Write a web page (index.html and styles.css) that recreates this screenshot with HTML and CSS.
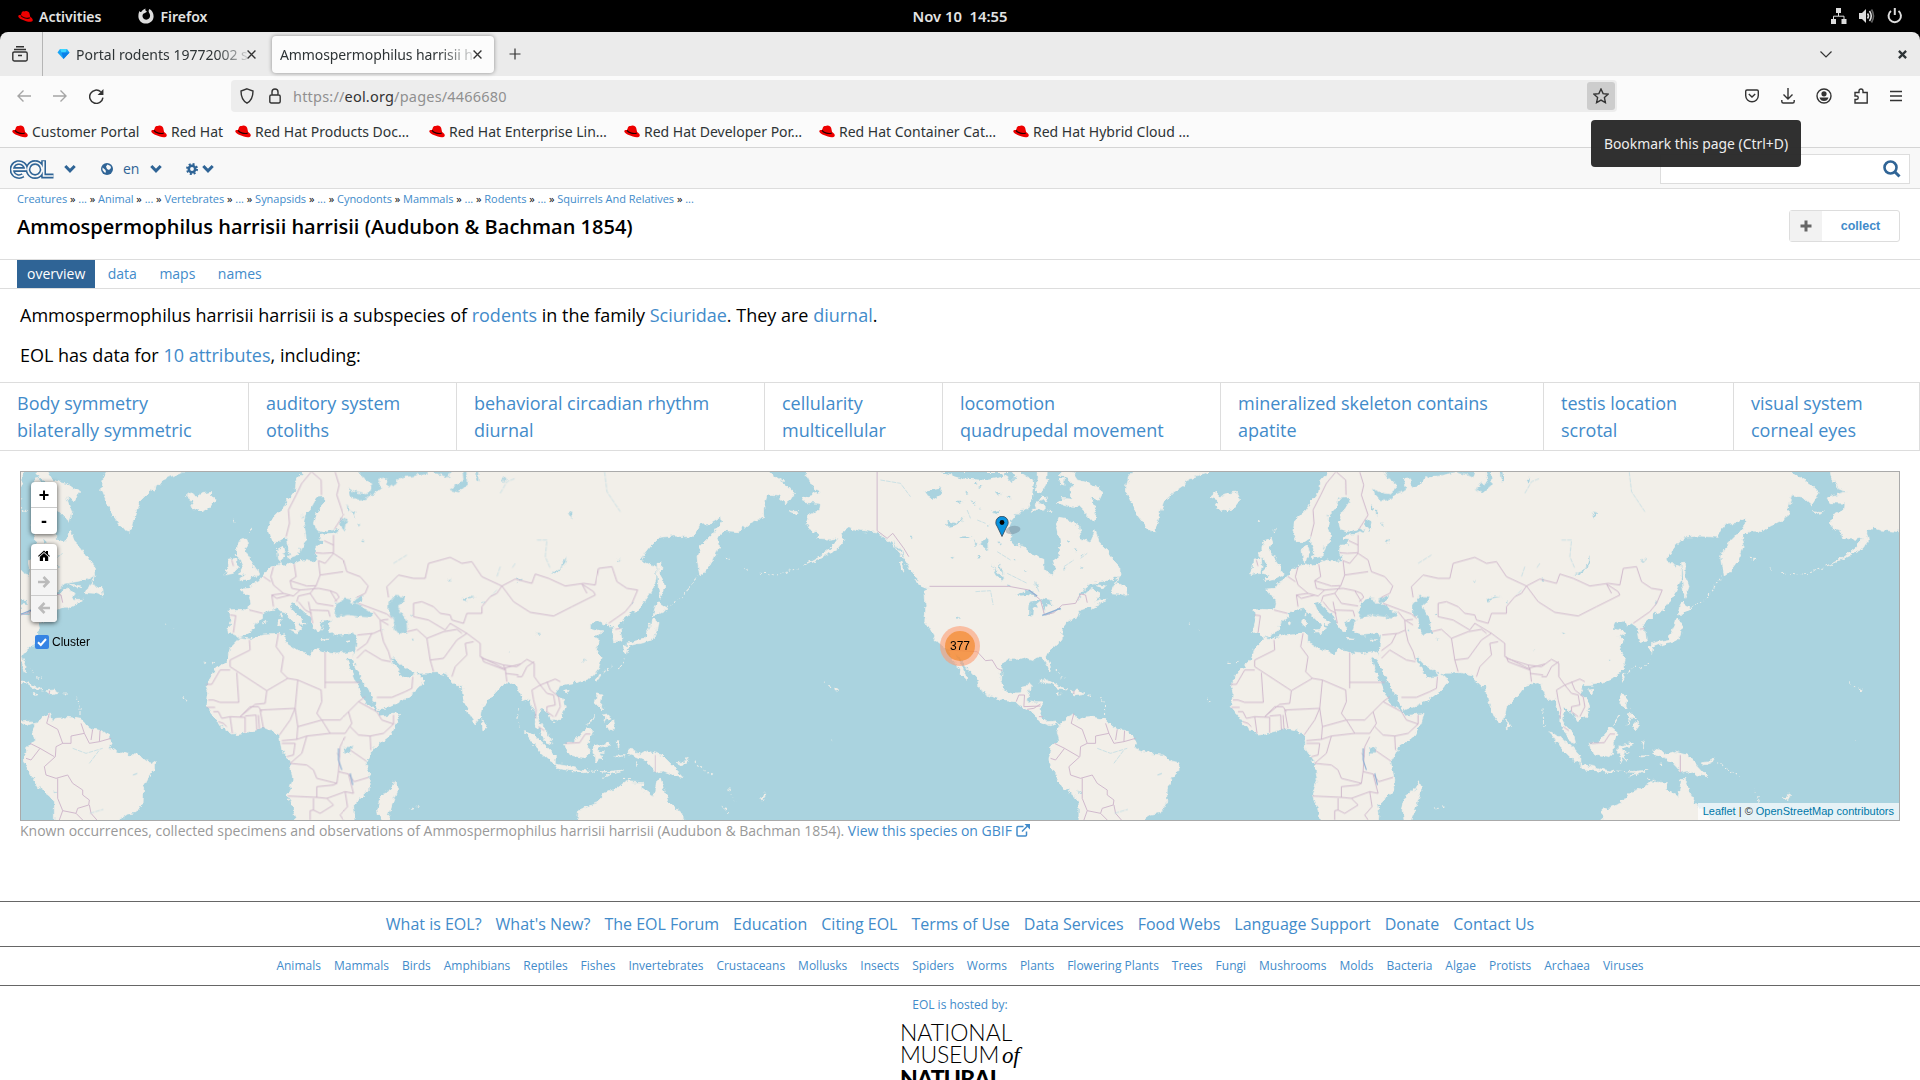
FILE: index.html
```html
<!DOCTYPE html>
<html lang="en">
<head>
<meta charset="utf-8">
<title>Ammospermophilus harrisii harrisii</title>
<link rel="stylesheet" href="styles.css">
</head>
<body>
<svg class="defs" width="0" height="0">
<defs>
<symbol id="hat" viewBox="0 0 16 13"><path fill="#e00" d="M3.600 3.500C4 1.500 5 .7 6 1c1 .3 1.500-.5 2.700-.4 1.700.2 3 .8 3.500 2.500l.9 3.800c1.500.9 3 2.200 2.600 3.800-.5 1.900-3.900 1.800-6.900.8C5.500 10.500.7 8.700.3 6.500.1 5.200 1.300 4.800 3 5z"/><path fill="none" stroke="#200" stroke-width="1.200" d="M3 5.400c1.400 2.300 7 4 9.700 2.500"/></symbol>
<symbol id="chev" viewBox="0 0 12 10"><path d="M1.300 2 6 6.800l4.700-4.800" fill="none" stroke="#2f6496" stroke-width="3"/></symbol>
</defs>
</svg>

<header class="gnome">
  <div class="gleft"><svg class="ghat"><use href="#hat"/></svg><b class="act">Activities</b>
  <svg class="gfox" viewBox="0 0 16 16"><path fill="#ddd" fill-rule="evenodd" d="M1.500 3C2 4 2.600 4 3.200 4 4 2.500 5.500 1.200 7.500.5 7 2 7.500 3 9 3.700 7.500 5 5 5 4.600 7c-.5 2.500 1.200 4.700 3.600 4.700 2.300 0 3.900-1.800 3.900-3.900 0-1.800-1-2.700-1.400-4C10.500 2.500 11 1.500 11.500 1 14 2.500 15.600 5 15.600 8.300c0 4.300-3.300 7.300-7.500 7.300S.4 12.500.4 8.400C.4 6 .8 4.500 1.500 3z"/></svg><b>Firefox</b></div>
  <b class="clock">Nov 10&nbsp; 14:55</b>
  <div class="gright">
    <svg width="16" height="16" viewBox="0 0 16 16"><path fill="#ddd" d="M5 0h5v5H5zM0 11h5v5H0zM10.500 11h5v5h-5z"/><path fill="none" stroke="#ddd" d="M7.500 5v3M2.500 11V8.200h10.500V11"/></svg>
    <svg width="16" height="16" viewBox="0 0 16 16"><path fill="#ddd" d="M0 5h3l4-4v14l-4-4H0z"/><path fill="none" stroke="#ddd" stroke-width="1.600" d="M8.500 5.500q2 2.500 0 5M10.500 3q3.500 5 0 10"/><path fill="none" stroke="#666" stroke-width="1.600" d="M12.500 1.500q4 6.500 0 13"/></svg>
    <svg width="16" height="16" viewBox="0 0 16 16"><path fill="none" stroke="#ddd" stroke-width="2" d="M4 3a6.200 6.200 0 1 0 7.500 0M7.800 0v7"/></svg>
  </div>
</header>

<div class="browser">
  <div class="tabbar">
    <div class="fxview"><svg width="16" height="16" viewBox="0 0 16 16"><path fill="none" stroke="#333" stroke-width="1.400" d="M4 .8h8M2 3.500h12M2.200 6h11.600q1.400 0 1.400 1.400v6.200q0 1.400-1.400 1.400H2.200q-1.400 0-1.400-1.400V7.400Q.8 6 2.200 6zM6 9.500h4"/></svg></div>
    <div class="tab"><svg width="13" height="12" viewBox="0 0 12 12"><path fill="#19a5f5" d="M2.500 1h7L12 4.500 6 11 0 4.500z"/><path fill="#3dd5ff" d="M2.500 1h7L8 4.500H4z"/><path fill="#0b7fe8" d="M4 4.500h8L6 11z"/></svg><span class="tt t1">Portal rodents 19772002 s</span><svg class="x" viewBox="0 0 8 8"><path d="m.5.500 7 7m0-7-7 7"/></svg></div>
    <div class="tab on"><span class="tt t2">Ammospermophilus harrisii h</span><svg class="x" viewBox="0 0 8 8"><path d="m.5.500 7 7m0-7-7 7"/></svg></div>
    <svg class="plus" viewBox="0 0 12 12"><path d="M6 .5v11M.5 6h11"/></svg>
    <svg class="down" viewBox="0 0 12 7"><path d="m.5.500 5.500 5.500L11.500.5"/></svg>
    <svg class="close" viewBox="0 0 8 8"><path d="m.8.800 6.400 6.400m0-6.400L.8 7.200"/></svg>
  </div>
  <div class="toolbar">
    <div class="nav">
      <svg class="dim" width="14" height="12" viewBox="0 0 14 12"><path d="M14 6H1m5.500-5.500L1 6l5.500 5.500"/></svg>
      <svg class="dim" width="14" height="12" viewBox="0 0 14 12"><path d="M0 6h13M7.500.5 13 6l-5.500 5.500"/></svg>
      <svg width="15" height="15" viewBox="0 0 14 14"><path d="M11 2.600A6.200 6.200 0 1 0 13 8"/><path fill="#333" stroke="none" d="M13.500 0v5.500H8z"/></svg>
    </div>
    <div class="url">
      <svg width="14" height="16" viewBox="0 0 14 16"><path d="M7 .8 13 3c0 6-2 10-6 12.200C3 13 1 9 1 3z"/></svg>
      <svg width="12" height="16" viewBox="0 0 12 16"><path d="M2.300 7h7.400q1.500 0 1.500 1.500v5q0 1.500-1.500 1.500H2.300Q.8 15 .8 13.500v-5Q.8 7 2.300 7zM3 7V4a3 3 0 0 1 6 0v3"/></svg>
      <span class="addr">https://<i>eol.org</i>/pages/4466680</span>
      <span class="star"><svg width="16" height="16" viewBox="0 0 16 16"><path d="m8 1 2.100 4.600 5 .6-3.700 3.400 1 5L8 12.100l-4.400 2.500 1-5L.9 6.200l5-.6z"/></svg></span>
    </div>
    <div class="tools">
      <svg width="14" height="14" viewBox="0 0 14 14"><path d="M2 1h10q1.300 0 1.300 1.300V6.500a6.300 6.300 0 0 1-12.600 0V2.300Q.7 1 2 1zM3.800 5 7 8l3.200-3"/></svg>
      <svg width="14" height="16" viewBox="0 0 14 16"><path d="M7 0v11M2.500 6.500 7 11l4.500-4.500M.8 12v1.500q0 1.500 1.500 1.500h9.400q1.500 0 1.500-1.500V12"/></svg>
      <svg width="16" height="16" viewBox="0 0 16 16"><circle cx="8" cy="8" r="7"/><circle cx="8" cy="5.800" r="2.600" fill="#333" stroke="none"/><path fill="#333" stroke="none" d="M3.500 9.500h9q-1 3.500-4.500 3.500t-4.500-3.500z"/></svg>
      <svg width="14" height="16" viewBox="0 0 14 16"><path d="M1 4.500h4V3a2 2 0 0 1 4 0v1.500h4.200V15H1v-3.500h1.500a1.600 1.600 0 0 0 0-3.500H1z"/></svg>
      <svg width="12" height="12" viewBox="0 0 12 12"><path d="M0 1.500h12M0 6h12M0 10.500h12"/></svg>
    </div>
  </div>
  <div class="bookmarks">
    <span><svg><use href="#hat"/></svg>Customer Portal</span><span><svg><use href="#hat"/></svg>Red Hat</span><span><svg><use href="#hat"/></svg>Red Hat Products Doc…</span><span><svg><use href="#hat"/></svg>Red Hat Enterprise Lin…</span><span><svg><use href="#hat"/></svg>Red Hat Developer Por…</span><span><svg><use href="#hat"/></svg>Red Hat Container Cat…</span><span><svg><use href="#hat"/></svg>Red Hat Hybrid Cloud …</span>
  </div>
</div>
<div class="tooltip">Bookmark this page (Ctrl+D)</div>

<div class="eolbar">
  <svg class="logo" viewBox="0 0 44 19"><g fill="none"><path stroke="#2f6496" stroke-width="4.800" d="M2.500 9.500H16A7 7 0 1 0 13 15.300M25 2.500a7 7 0 1 0 .1 0M33.600 .3V16H43.500"/><path stroke="#f8f8f8" stroke-width="1.700" d="M2.500 9.500H16A7 7 0 1 0 13 15.300M25 2.500a7 7 0 1 0 .1 0M33.600 1.300V16H43.500"/></g></svg>
  <svg class="cv c1"><use href="#chev"/></svg>
  <svg class="globe" viewBox="0 0 12 12"><circle cx="6" cy="6" r="6" fill="#2f6496"/><path fill="#f8f8f8" d="M6.500 1.500 9.500 3 10 5 8 7 6 6 5 3.500zM1.500 4.500 4.500 7 5 9.500 3.500 9.500 1.500 7z"/></svg>
  <span class="en">en</span>
  <svg class="cv c2"><use href="#chev"/></svg>
  <svg class="gear" viewBox="0 0 12 12"><circle cx="6" cy="6" r="3.200" fill="none" stroke="#2f6496" stroke-width="2.600"/><circle cx="6" cy="6" r="5" fill="none" stroke="#2f6496" stroke-width="2" stroke-dasharray="2 1.927"/></svg>
  <svg class="cv c3"><use href="#chev"/></svg>
  <div class="search"><svg width="18" height="18" viewBox="0 0 18 18"><circle cx="7.500" cy="7.500" r="6" fill="none" stroke="#2f6496" stroke-width="2.600"/><path stroke="#2f6496" stroke-width="3" d="m11.500 11.500 5 5"/></svg></div>
</div>

<main>
  <div class="crumbs"><a>Creatures</a> » <a>...</a> » <a>Animal</a> » <a>...</a> » <a>Vertebrates</a> » <a>...</a> » <a>Synapsids</a> » <a>...</a> » <a>Cynodonts</a> » <a>Mammals</a> » <a>...</a> » <a>Rodents</a> » <a>...</a> » <a>Squirrels And Relatives</a> » <a>...</a></div>
  <div class="titlerow"><h1>Ammospermophilus harrisii harrisii (Audubon &amp; Bachman 1854)</h1>
    <div class="collect"><span><svg width="12" height="12" viewBox="0 0 12 12"><path stroke="#666" stroke-width="3" d="M6 .5v11M.5 6h11"/></svg></span><b>collect</b></div></div>
  <nav class="pagetabs"><a class="sel">overview</a><a>data</a><a>maps</a><a>names</a></nav>
  <p class="p1">Ammospermophilus harrisii harrisii is a subspecies of <a>rodents</a> in the family <a>Sciuridae</a>. They are <a>diurnal</a>.</p>
  <p class="p2">EOL has data for <a>10 attributes</a>, including:</p>
  <div class="traits">
    <a>Body symmetry<br>bilaterally symmetric</a><a>auditory system<br>otoliths</a><a>behavioral circadian rhythm<br>diurnal</a><a>cellularity<br>multicellular</a><a>locomotion<br>quadrupedal movement</a><a>mineralized skeleton contains<br>apatite</a><a>testis location<br>scrotal</a><a>visual system<br>corneal eyes</a>
  </div>
  <div class="map">
    <svg class="world" viewBox="63 36 5631 1044" preserveAspectRatio="none">
      <defs>
      <filter id="coast" filterUnits="userSpaceOnUse" x="-100" y="0" width="6000" height="1100" color-interpolation-filters="sRGB"><feTurbulence type="fractalNoise" baseFrequency=".06" numOctaves="3" seed="4" result="n"/><feDisplacementMap in="SourceGraphic" in2="n" scale="18" xChannelSelector="R" yChannelSelector="G"/></filter>
      <g id="land">
          <path d="M910 20 905 42 888 62 885 92 865 118 845 150 810 180 805 215 815 245 835 245 858 230 862 255 872 290 895 285 905 255 918 245 917 225 910 190 915 165 932 148 945 112 972 110 976 125 950 160 943 190 948 210 965 215 1005 205 1020 212 1000 222 965 226 955 238 970 240 970 255 950 255 945 265 945 280 952 300 930 305 905 300 880 310 850 318 835 300 832 268 850 258 855 275 846 290 842 312 820 320 805 328 790 350 775 362 757 372 750 385 725 387 732 400 748 410 752 430 748 450 715 448 687 450 692 475 683 510 685 520 705 520 715 532 735 525 758 512 765 490 790 470 792 460 820 450 835 445 855 460 880 485 890 500 888 515 905 505 895 488 918 492 900 475 880 455 868 428 880 425 900 445 925 465 935 485 943 505 958 517 966 500 957 485 985 478 997 478 990 490 985 510 1000 522 1020 525 1060 520 1072 525 1068 560 1058 600 1075 635 1100 680 1120 720 1133 752 1165 740 1210 720 1250 690 1272 660 1245 635 1235 650 1205 655 1190 625 1172 595 1180 592 1210 622 1240 635 1260 640 1310 638 1345 645 1350 660 1370 680 1385 680 1390 720 1410 770 1425 792 1440 772 1445 740 1480 705 1505 675 1540 668 1552 680 1568 722 1590 715 1595 735 1606 760 1605 790 1620 812 1635 845 1653 852 1645 820 1620 795 1612 775 1620 745 1645 760 1658 785 1685 770 1695 740 1685 715 1665 700 1675 675 1702 672 1740 665 1775 650 1795 625 1802 595 1785 570 1795 540 1780 530 1805 516 1770 508 1770 490 1800 482 1805 495 1820 490 1835 500 1843 545 1865 540 1860 510 1852 495 1880 470 1895 455 1915 450 1950 400 1967 360 1968 320 1945 312 1920 300 1950 260 1978 232 2020 228 2080 232 2100 190 2135 188 2163 172 2165 185 2135 225 2100 260 2090 290 2098 348 2112 338 2140 300 2155 260 2150 235 2175 212 2215 215 2240 195 2290 172 2290 145 2300 105 2330 108 2360 135 2382 100 2355 72 2310 42 2280 20Z"/>
          <path d="M712 543 718 533 750 537 790 522 835 520 852 522 852 545 890 570 930 587 940 565 975 577 1010 582 1040 578 1060 573 1060 600 1045 590 1040 600 1055 640 1080 700 1100 735 1130 755 1140 768 1198 760 1190 790 1165 830 1120 865 1098 905 1107 950 1107 990 1060 1035 1063 1060 1060 1100 890 1100 880 1050 863 1005 878 960 870 910 845 870 838 825 815 810 790 805 765 810 735 818 697 822 660 795 640 765 620 740 625 700 618 675 640 635 680 600 690 565Z"/>
          <path d="M1185 965 1192 990 1180 1020 1165 1070 1160 1090 1140 1090 1132 1050 1145 1005 1170 990ZM715 245 740 235 745 250 732 268 748 295 770 330 775 345 750 355 720 362 735 345 715 340 728 320 720 300 705 285 712 265ZM685 298 710 295 712 325 700 340 675 345 685 320ZM868 510 893 508 890 522ZM835 480 843 478 842 498 833 495ZM838 458 844 455 843 472ZM965 535 988 538 970 540ZM1038 541 1055 539 1045 545ZM1445 778 1460 800 1448 810ZM858 290 870 285 868 298ZM748 208 752 205 749 215ZM790 488 798 484 795 492ZM700 180 705 183 702 188ZM612 606 618 608 614 611ZM635 608 644 604 640 612ZM1232 1046 1238 1044 1235 1049ZM1250 1037 1256 1038 1252 1041Z"/>
          <g transform="translate(1440)"><path d="M135 815 165 827 200 860 225 888 225 912 200 895 165 860ZM225 912 270 920 300 930 328 934 310 938 235 926ZM335 933 365 935 400 933 430 930 395 938ZM372 952 390 938 406 935ZM253 850 275 850 290 835 318 803 337 818 325 845 326 880 312 893 270 885 258 868ZM340 858 385 850 386 855 350 864 352 872 372 880 357 880 370 905 356 890 347 908 345 885 338 880ZM350 702 365 705 360 740 370 745 365 750 345 730ZM380 800 397 780 401 800 392 812 385 798ZM365 765 385 762 392 775 378 772 370 790 375 770ZM322 795 345 765 330 790ZM348 660 355 642 363 640 352 667ZM250 690 268 688 260 702ZM428 562 445 558 440 580ZM440 550 480 540 490 538 510 500 515 475 533 485 527 520 520 538 500 545 470 552 440 560ZM518 465 525 440 532 428 562 448 540 460ZM530 310 542 310 540 345 553 378 540 415 534 380ZM440 880 445 867 465 870 480 885 500 873 545 885 575 915 608 950 580 945 550 933 525 937 518 925 500 905ZM590 908 615 905 627 890 620 908 600 915ZM290 1100 295 1050 350 1030 372 1000 410 985 435 965 488 968 482 985 520 1010 530 960 540 955 555 1000 570 1030 600 1055 625 1100ZM835 1015 855 1003 845 1020ZM1062 684 1072 690 1065 695ZM1030 666 1036 670 1034 669ZM1046 676 1052 679 1048 680ZM925 152 952 155 945 160ZM410 845 418 840 415 868ZM400 888 435 887 410 891ZM466 910 472 905 470 918ZM850 1003 857 1002 853 1006Z"/>
          <path class="isl" d="M640 905 670 930 705 950M722 1038 745 1056M560 443 605 412 625 385 650 350M745 985 755 1010 765 1030M735 295 760 300M795 325 805 330M835 340 900 342 960 322M115 745 112 770 120 800M360 645 400 615M410 630 435 598M1050 843H1052M430 955 455 960"/></g>
          <g transform="translate(2580)"><path d="M-165 20-162 50-140 85-115 95-175 112-165 128-120 130-122 150-155 165-162 190-150 210-130 215-128 235-90 238-66 234-85 262-120 288-175 318-130 298-70 268-50 242-55 215-35 200-10 210 20 213 50 216 75 235 95 250 112 275 130 295 145 325 160 345 185 370 208 387 193 392 196 440 193 485 212 515 225 540 245 555 262 570 275 590 290 620 305 645 318 658 318 645 305 620 290 595 283 580 300 595 320 625 352 660 356 688 390 708 430 722 465 725 478 738 500 748 520 760 530 780 550 790 570 797 590 790 600 797 590 815 596 840 570 865 562 900 580 935 605 980 640 1005 655 1025 655 1100 845 1100 855 1075 875 1062 900 1058 918 1030 920 985 935 955 955 930 955 908 930 902 905 885 870 882 835 870 820 865 828 850 815 825 800 812 770 808 750 795 735 778 700 772 660 775 648 782 640 762 620 770 600 795 585 783 560 785 547 775 540 755 543 728 520 728 498 722 503 700 512 674 485 678 478 698 450 700 430 690 420 660 422 620 440 598 470 598 490 592 520 600 540 590 555 605 568 638 570 622 558 590 565 575 590 555 605 535 605 505 620 485 650 470 660 450 690 440 695 445 742 418 720 418 705 425 717 400 690 385 650 420 665 390 690 370 720 365 755 358 778 345 778 322 755 295 735 265 715 245 703 208 690 245 660 235 655 200 625 180 595 175 588 195 597 230 600 260 595 290 578 300 583 325 580 348 568 345 550 325 550 298 515 285 490 262 455 250 450 225 440 205 455 175 480 150 500 148 512 120 515 95 520 60 500 50 480 36 480 20Z"/>
          <path d="M625 20 650 60 690 70 728 95 715 122 690 110 708 158 700 185 680 165 655 140 630 138 590 130 605 115 635 118 628 90 640 75 620 55 600 45 600 20ZM825 20 803 50 797 90 812 125 830 165 858 203 883 217 890 185 910 125 940 95 970 75 985 55 1040 38 1060 20ZM775 348 750 398 775 400 800 408 797 385 775 372 765 372ZM1048 110 1075 122 1062 140 1095 155 1120 143 1137 120 1125 96 1095 102 1080 110 1065 95ZM512 155 530 128 555 140 548 155 535 145ZM536 125 545 108 560 118ZM535 665 560 660 600 680 622 690 595 688 570 670ZM632 692 655 690 670 700 640 705ZM683 702 693 702 688 705ZM588 700 603 703 595 706ZM530 20 560 30 558 70 540 100 525 90 530 50ZM700 372 735 378 725 384ZM160 358 185 368 205 388 180 378ZM118 308 128 315 130 338ZM595 58 612 55 610 75 597 72ZM560 150 575 152 568 155Z"/>
          <path class="isl" d="M585 628 595 640M600 650 615 655M720 710 732 735 732 765M985 492 990 494M1010 505 1020 506M1040 712 1055 730"/></g>
      </g>
      <g id="sea">
          <path d="M1010 428 1035 415 1050 418 1055 430 1070 432 1090 443 1118 460 1115 473 1075 470 1045 465 1010 474 1000 460ZM1060 422 1090 405 1083 425 1065 430ZM1165 432 1185 408 1215 410 1210 425 1190 440 1205 460 1218 480 1222 520 1195 523 1180 505 1182 480 1165 455ZM1070 20 1088 50 1112 70 1113 90 1097 103 1060 95 1045 83 1052 108 1073 122 1095 120 1110 105 1130 95 1145 85 1137 60 1155 55 1165 82 1190 70 1200 52 1240 48 1290 36 1345 52 1355 20ZM1385 20 1390 60 1350 88 1375 97 1400 75 1398 20ZM1425 20 1427 55 1435 65 1432 20ZM1385 418 1405 410 1430 410 1400 415 1392 428ZM1648 345 1680 325 1698 288 1695 310 1670 340ZM1032 862 1052 860 1050 880 1033 880ZM1020 175 1040 185 1035 215 1022 200ZM1055 150 1065 155 1060 170ZM1445 425 1455 425 1450 430ZM1610 518 1622 520 1615 525ZM1230 465 1240 462 1235 470ZM160 990 172 1000 167 1002Z"/>
          <path d="M1083 240 1092 238 1090 248ZM1040 130 1048 150 1042 155ZM1072 190 1080 195 1075 200ZM1345 360 1353 358 1350 366ZM1522 573 1528 572 1525 578ZM1550 355 1562 358 1555 366ZM1890 425 1898 428 1892 434ZM1850 302 1862 300 1855 306ZM905 165 912 168 908 172ZM895 260 900 262 896 270ZM1142 510 1148 508 1145 514ZM1235 535 1245 538 1238 542ZM1750 598 1758 602 1752 604ZM1700 155 1716 158 1712 175ZM1506 60 1516 50 1512 70Z"/>
          <g transform="translate(2580)"><path d="M468 408 490 392 520 398 532 412 500 405ZM505 468 508 425 545 418 530 430 518 445 515 468ZM542 415 570 420 575 435 558 432 550 455 545 440ZM545 468 580 452 575 462ZM578 452 602 443 600 450ZM392 312 405 330 430 355 425 362 408 345ZM410 310 425 325 428 345ZM190 95 245 85 240 105 215 120 205 105ZM258 182 285 190 312 170 290 195 262 200ZM285 470 298 478 292 480ZM360 250 380 235 382 270ZM295 230 335 228 310 240ZM95 240 120 270 135 300 110 265ZM240 36 300 55 375 60 430 50 425 36ZM430 36 450 66 465 50 455 36ZM388 155 420 150 405 162ZM285 125 310 125 295 132Z"/>
          <path d="M330 120 345 128 340 135ZM355 140 362 138 360 150ZM340 240 350 250 345 255ZM410 100 420 98 415 106ZM440 110 450 112 446 118ZM350 80 365 76 360 84ZM315 95 325 98 318 102ZM340 70 350 68 346 74ZM270 292 280 290 276 297ZM350 290 362 292 355 296ZM415 242 421 250 416 262ZM455 298 464 300 460 306ZM490 330 500 332 494 336ZM620 240 632 244 626 248ZM640 268 650 270 644 274ZM605 325 614 322 612 330ZM660 285 668 283 666 290ZM525 365 532 378 527 382ZM660 318 670 320 664 324ZM440 370 450 374 446 380ZM380 195 386 196 382 202ZM150 230 156 226 154 235Z"/></g>
      </g>
      <g id="bord">
          <path d="M933 36 905 70 888 105 865 150 868 190 858 230M935 36 963 60 964 105M1005 36 1017 75 1010 105 1030 165 1003 207M1000 225 1000 278 968 280 945 278M1000 255 972 242M1000 280 1030 300 1040 335 1080 350 1104 378 1095 400 1070 412M955 302 975 310 1000 280M955 302 960 345 948 377 920 378 870 362 888 350 882 312M1030 335 960 345M820 320 812 350 820 375 850 400 815 405 830 415 870 405M870 362 875 385 900 390 880 408 850 400M900 390 955 385 990 392 1010 400 1017 412 1003 425M948 377 930 400 895 408 890 425M930 400 950 430 1000 438M925 425 930 450 985 452 990 470M895 425 915 450 935 460M930 450 938 490M990 392 1010 425M790 350 812 365M748 450 788 460M690 465 707 467 700 518M1075 430 1160 462 1175 475M1120 455 1140 480 1165 495M1140 480 1142 510 1120 520 1072 525M1142 510 1150 545 1165 575 1172 600M1115 520 1100 550 1070 572M1070 595 1095 570 1145 600 1172 605M1130 712 1175 712 1215 695 1235 685 1238 650M1165 412 1160 380 1195 345 1240 355 1275 355 1285 310 1350 292 1385 310 1415 305 1445 350 1505 378 1490 400 1470 410 1445 440 1445 460 1400 460 1390 490 1355 480 1350 465 1320 460 1300 440 1265 425 1240 430 1240 470M1240 470 1285 480 1335 510 1350 490 1400 520 1440 550 1440 590 1480 610 1510 625 1560 612M1220 515 1250 508 1280 535 1330 515 1370 508 1385 520M1280 535 1290 600 1330 595 1370 540 1400 520M1290 600 1300 635M1355 650 1365 620 1400 585 1395 550 1420 545M1445 595 1510 615 1515 630 1450 605 1445 590M1515 640 1555 645M1515 625 1520 665M815 405 820 440M695 300 700 318M1145 480 1165 478"/>
          <path d="M1505 378 1545 357 1595 370 1605 342 1645 355 1695 378 1750 370 1785 375 1795 325 1835 320 1850 365 1880 385 1912 390 1895 430 1875 455 1825 490M1505 378 1540 425 1590 457 1660 468 1715 440 1785 405 1780 395 1745 372 1760 400M1510 615 1550 620 1580 598 1602 610 1602 650 1620 675 1665 657 1680 665M1550 650 1565 650 1580 620 1602 605M1620 675 1595 690 1600 720 1608 750 1605 775M1620 675 1640 700 1660 705 1665 735 1640 740 1640 755 1660 770M1640 665 1650 690 1675 710 1680 740 1665 770M1695 850 1738 848 1755 822 1770 822M1845 508 1860 505M1615 800 1632 812M1966 885 1966 937"/>
          <path d="M748 540 750 570 690 600 690 620 800 692 863 655 893 660 963 690M835 520 828 560 850 590 843 635 863 655M975 577 975 685M975 667H1080M618 673H635L660 630H690M710 638 716 727H660L640 720 625 720M800 692 795 730 765 733 720 770M893 660 885 745 780 750 790 805M963 690 965 725 950 760 965 780 990 820 1035 820 1055 790 1045 755 1020 780 965 780 893 800 885 745M1045 755 1075 725 1095 710M1075 725 1130 755 1145 780 1180 792 1150 820 1110 828 1075 825 1050 800M1110 828 1112 870M1180 792 1180 765M885 745 870 780 838 825M893 800 890 838 845 842M890 838 920 828 990 820M920 828 905 880 870 910M845 850 885 850 880 885 860 890M870 910 920 915 940 930 950 955 1010 970 1000 975 950 980 950 1012 863 1008M1010 970 1015 935 1020 860 1035 830M1050 870 1098 903M1020 890 1010 880M1015 935 1045 942 1062 965 1105 952M1045 942 1060 1000 1035 995 980 1015 950 1012M1035 995 1042 1040 1020 1065 1030 1080M940 1015V1050L930 1052V1080M940 1050 960 1060 1000 1035 980 1015M620 742H645M640 755 655 755 665 775 690 770 697 820M690 770 735 772 735 818M735 768 768 765 770 810M775 765 778 808M720 770 750 740 775 740 785 755M655 785 670 790 680 800"/>
          <g transform="translate(2580)"><path d="M50 36V212L80 235 97 220 130 265 145 290M207 379H445L505 390 540 420 552 465 580 458 605 435 645 430 660 402 675 405 680 428M262 570 350 575 375 602 395 600 410 625 425 632M467 725 475 705 492 705 490 740 540 738M500 748 520 745 540 732M535 770 547 770M640 760 632 790 665 808 680 850 705 850 705 828 745 820 735 790M745 820 760 850 790 845 825 835M770 808 765 840M792 812 790 845M680 850 660 860 658 890 625 920 630 945 660 955 695 945 710 970 740 990 740 1005 760 1020 758 1035 725 1045 720 1060 680 1052 665 1015 665 955M582 850 612 865 585 900 570 895M612 865 655 890M760 1035 765 1060 800 1100M720 1060 740 1080M680 1052 670 1080M640 692V702"/></g>
      </g>
      <g id="lake">
          <path d="M1813 36 1820 95 1860 155M1500 100 1520 65 1545 55M1610 240 1640 240 1635 290 1650 325M1180 310 1220 285M1350 88 1360 95M1490 390 1475 405M1500 320 1490 350M1545 310 1535 325M270 1060 310 1048M400 945 412 940"/>
          <path class="deep" d="M1015 865 1015 900 1025 930M1050 940 1058 975"/>
          <g transform="translate(2580)"><path d="M60 60 120 70 150 110M710 865 750 880 800 865M345 395 390 392 398 435M410 275 450 300M660 295 680 280M440 340 500 370M350 180 375 190M610 320 640 300M535 395 525 370M320 150 330 175M760 910 790 870M890 945 905 940"/><path class="deep" d="M505 390 530 408M545 466 600 445"/></g>
      </g>
      </defs>
      <g class="land" filter="url(#coast)"><use href="#land" x="-3072"/><use href="#land"/><use href="#land" x="3072"/></g>
      <g class="sea" filter="url(#coast)"><use href="#sea" x="-3072"/><use href="#sea"/><use href="#sea" x="3072"/></g>
      <g class="bord"><use href="#bord" x="-3072"/><use href="#bord"/><use href="#bord" x="3072"/></g>
      <g class="lake"><use href="#lake" x="-3072"/><use href="#lake"/><use href="#lake" x="3072"/></g>
    </svg>
    <svg class="pin" viewBox="0 0 28 22"><ellipse cx="18" cy="14" rx="7.500" ry="4" transform="rotate(-10 18 14)" fill="#678" opacity=".38"/><path d="M7 20.500 2.500 11Q.5 8 .8 6.500a6.200 6.200 0 0 1 12.400 0Q13.500 8 11.500 11z" fill="#0a93df" stroke="#345" stroke-width=".8"/><circle cx="7" cy="6.500" r="2.400" fill="#000"/></svg>
    <div class="cluster"><span>377</span></div>
    <div class="ctl zoomctl"><b>+</b><b>-</b></div>
    <div class="ctl navctl"><b><svg width="12" height="11" viewBox="0 0 12 11"><path d="M0 6 6 .5 8 2.300V1h2v3.200L12 6l-.7.700L6 2 .7 6.700zM1.800 6.700 6 3l4.200 3.700V11H7V7.500H5V11H1.800z"/></svg></b><b class="off"><svg width="12" height="12" viewBox="0 0 12 12"><path d="M0 6h10M5.500 1l5 5-5 5"/></svg></b><b class="off"><svg width="12" height="12" viewBox="0 0 12 12"><path d="M12 6H2M6.500 1l-5 5 5 5"/></svg></b></div>
    <label class="chk"><svg width="14" height="14" viewBox="0 0 14 14"><rect width="14" height="14" rx="2" fill="#3584e4"/><path d="m3 7.200 2.800 2.800L11 4" fill="none" stroke="#fff" stroke-width="2"/></svg>Cluster</label>
    <div class="attr"><a>Leaflet</a> | © <a>OpenStreetMap contributors</a></div>
  </div>
  <div class="caption">Known occurrences, collected specimens and observations of Ammospermophilus harrisii harrisii (Audubon &amp; Bachman 1854). <a>View this species on GBIF <svg width="14" height="13" viewBox="0 0 14 13"><path fill="none" stroke="#428bca" stroke-width="1.500" d="M7.500 2.500H2q-1 0-1 1V11q0 1 1 1h7.500q1 0 1-1V7.500M6 7.500l6-6"/><path fill="#428bca" d="M8.500 0H14v5.500z"/></svg></a></div>
</main>
<footer>
  <div class="f1"><a>What is EOL?</a><a>What's New?</a><a>The EOL Forum</a><a>Education</a><a>Citing EOL</a><a>Terms of Use</a><a>Data Services</a><a>Food Webs</a><a>Language Support</a><a>Donate</a><a>Contact Us</a></div>
  <div class="f2"><a>Animals</a><a>Mammals</a><a>Birds</a><a>Amphibians</a><a>Reptiles</a><a>Fishes</a><a>Invertebrates</a><a>Crustaceans</a><a>Mollusks</a><a>Insects</a><a>Spiders</a><a>Worms</a><a>Plants</a><a>Flowering Plants</a><a>Trees</a><a>Fungi</a><a>Mushrooms</a><a>Molds</a><a>Bacteria</a><a>Algae</a><a>Protists</a><a>Archaea</a><a>Viruses</a></div>
  <div class="host"><a>EOL is hosted by:</a>
    <div class="nmnh"><span class="n1">NATIONAL</span><span class="n2">MUSEUM<em>of</em></span><span class="n3">NATURAL</span></div></div>
</footer>
</body>
</html>
```
FILE: styles.css
```css
*{box-sizing:border-box}
html,body{margin:0;height:1080px;overflow:hidden;background:#fff}
body{font-family:"Open Sans","Noto Sans",sans-serif;color:#000;white-space:nowrap;position:relative}
a{color:#428bca;text-decoration:none}
svg{display:block;flex:none}
.defs{position:absolute}
.gnome,.browser,.tooltip{font-family:"Noto Sans","Open Sans",sans-serif}
.gnome{height:32px;background:#000;color:#e4e4e4;display:grid;grid-template-columns:1fr auto 1fr;align-items:center;font-size:14px}
.gnome b{font-weight:600}
.gnome .clock{font-size:14.800px}
.gleft{display:flex;align-items:center;padding-left:18px}
.ghat{width:15px;height:13px;margin-right:6px}
.gfox{width:16px;height:16px;margin:0 6px 0 37px}
.gright{display:flex;justify-content:flex-end;gap:12px;padding-right:17px}
.browser{background:#000;height:116px;color:#2e3436}
.tabbar{height:44px;background:#ebebeb;border-radius:8px 8px 0 0;display:flex;align-items:center}
.fxview{width:43px;height:44px;border-right:1px solid #b5b5b5;display:flex;align-items:center;padding-left:12px}
.tab{display:flex;align-items:center;height:37px;width:221px;padding:0 8px 0 14px;font-size:14px}
.tab .tt{overflow:hidden;flex:1}
.t1{margin-left:6px}
.tab.on{background:#fcfcfc;border-radius:4px;box-shadow:0 0 4px rgba(0,0,0,.4);padding:0 12px 0 8px;width:222px;margin-left:8px}
.t2{letter-spacing:-.1px}
.tt{-webkit-mask-image:linear-gradient(90deg,#000 82%,rgba(0,0,0,.15));mask-image:linear-gradient(90deg,#000 82%,rgba(0,0,0,.15))}
.x{width:9px;height:9px}
.x path,.plus path,.down path{fill:none;stroke:#333;stroke-width:1.200}
.plus{width:12px;height:12px;margin-left:15px}
.down{width:12px;height:7px;margin-left:auto}
.close{width:9px;height:9px;margin:0 13px 0 66px}
.close path{stroke:#2e3436;stroke-width:2}
.toolbar{height:40px;background:#fbfbfb;display:flex;align-items:center}
.toolbar svg{fill:none;stroke:#333;stroke-width:1.400}
.nav{width:231px;display:flex;gap:22px;align-items:center;padding-left:17px}
.nav .dim{stroke:#a5a5a5}
.url{width:1386px;height:32px;background:#ededed;border-radius:4px;display:flex;align-items:center;padding:0 2px 0 9px;gap:15px;font-size:14.500px;color:#909090}
.url i{font-style:normal;color:#333}
.addr{margin-left:-3px;letter-spacing:.2px}
.star{margin-left:auto;width:28px;height:28px;background:#cdcdcd;border-radius:3px;display:flex;align-items:center;justify-content:center}
.tools{display:flex;align-items:center;margin-left:128px;gap:21.700px}
.bookmarks{height:32px;background:#fbfbfb;border-bottom:1px solid #d5d5d5;display:grid;grid-template-columns:139px 84px 194px 195px 195px 194px 1fr;padding:0 0 1px 12px;font-size:14px}
.bookmarks span{display:flex;align-items:center}
.bookmarks svg{width:16px;height:13px;margin-right:4px}
.tooltip{position:absolute;left:1591px;top:120px;width:210px;height:47px;border-radius:4px;background:rgba(40,40,40,.96);color:#eee;font-size:13.900px;line-height:47px;text-align:center}
.eolbar{height:41px;background:#f8f8f8;border-bottom:1px solid #ddd;display:flex;align-items:center;padding:2px 0 0 10px}
.logo{width:44px;height:19px}
.cv{width:12px;height:10px}
.c1{margin-left:10px}
.globe{width:12px;height:12px;margin-left:25px}
.en{font-size:14px;color:#2f6496;margin:0 12px 2px 10px}
.c2{margin-left:-1px}
.gear{width:12px;height:12px;margin-left:24px}
.c3{margin-left:4px}
.search{margin-left:auto;margin-right:10px;width:250px;height:30px;border:1px solid #ddd;background:#fff;display:flex;justify-content:flex-end;align-items:center;padding-right:8px}
.crumbs{height:20px;line-height:20px;padding-left:17px;font-size:11px;letter-spacing:-.015px}
.titlerow{height:50px;display:flex;justify-content:space-between;padding:0 20px 0 17px}
h1{margin:0;font-weight:600;font-size:20px;line-height:35px}
.collect{width:111px;height:32px;border:1px solid #ddd;border-radius:3px;margin-top:1px;display:flex;font:700 12.500px "Liberation Sans",sans-serif;color:#428bca}
.collect span{width:32px;background:#f2f2f2;display:flex;align-items:center;justify-content:center}
.collect b{flex:1;text-align:center;line-height:31px}
.pagetabs{height:30px;border:solid #ddd;border-width:1px 0;display:flex;padding-left:17px;font-size:14px;line-height:27px}
.pagetabs a{padding:0 10px;margin-right:2.500px}
.pagetabs .sel{background:#2f6496;color:#fff}
p{margin:0;padding-left:20px;font-size:18px;height:40px;line-height:40px}
.p1{margin-top:6px}
.p2{margin-bottom:7px}
.traits{height:69px;border:solid #ddd;border-width:1px 0;display:grid;grid-template-columns:249px 208px 308px 178px 278px 323px 190px 1fr;font-size:18px;line-height:27px}
.traits a{border-right:1px solid #ddd;padding:7px 0 0 17px}
.map{position:relative;height:350px;margin:20px 20px 0;border:1px solid #aaa;background:#aad3df;overflow:hidden;font-family:"Liberation Sans",sans-serif}
.world{width:100%;height:100%}
.land{fill:#f2efe9;stroke:#f2efe9;stroke-width:2;stroke-linejoin:round}
.isl{fill:none;stroke-width:3;stroke-dasharray:6 7}
.sea{fill:#aad3df}
.bord{fill:none;stroke:#cdb5ca;stroke-width:2.800;stroke-linejoin:round}
.lake{fill:none;stroke:#c3dde3;stroke-width:2.500;stroke-dasharray:14 3}
.deep{stroke:#8fb0d4;stroke-width:3.500;stroke-dasharray:none}
.pin{position:absolute;left:974px;top:44px;width:28px;height:22px}
.cluster{position:absolute;left:919px;top:154px;width:40px;height:40px;border-radius:50%;background:rgba(253,156,115,.6);padding:5px}
.cluster span{display:block;width:30px;height:30px;border-radius:50%;background:rgba(241,128,23,.6);font-size:12px;line-height:30px;text-align:center}
.ctl{position:absolute;left:10px;width:26px;border-radius:4px;background:#fff;box-shadow:0 1px 5px rgba(0,0,0,.65);overflow:hidden}
.ctl b{height:26px;display:flex;align-items:center;justify-content:center;border-bottom:1px solid #ccc;font-size:18px}
.zoomctl b{padding-top:1px}
.ctl b:last-child{border:0}
.ctl .off{background:#f4f4f4}
.off path{fill:none;stroke:#bbb;stroke-width:2.600}
.zoomctl{top:10px}
.navctl{top:72px}
.navctl b{padding-bottom:2px}
.chk{position:absolute;left:14px;top:163px;display:flex;align-items:center;gap:3px;font-size:12px}
.attr{position:absolute;right:0;bottom:0;height:17px;line-height:17px;padding:0 5px;background:rgba(255,255,255,.7);font-size:11px;color:#333}
.attr a{color:#0078a8}
.caption{height:24px;padding-left:20px;font-size:14px;line-height:20px;color:#999}
.caption svg{display:inline;vertical-align:-1px}
footer{margin-top:56px}
.f1{border-top:1px solid #666;height:45px;display:flex;justify-content:center;gap:14px;font-size:16px;line-height:44px}
.f2{border:solid #666;border-width:1px 0;height:40px;display:flex;justify-content:center;gap:13px;font-size:12px;line-height:38px}
.host{display:flex;flex-direction:column;align-items:center;font-size:12px;line-height:36px;padding-top:1px}
.nmnh{width:120px;height:66px;margin-top:-2px;display:flex;flex-direction:column;font-family:Lato,sans-serif;font-size:23px;line-height:22px;font-weight:300}
.n2{letter-spacing:-.3px}
.nmnh em{font-family:"Liberation Serif",serif;font-weight:400;margin-left:3px}
.n3{font-weight:900;letter-spacing:-.8px}
```
